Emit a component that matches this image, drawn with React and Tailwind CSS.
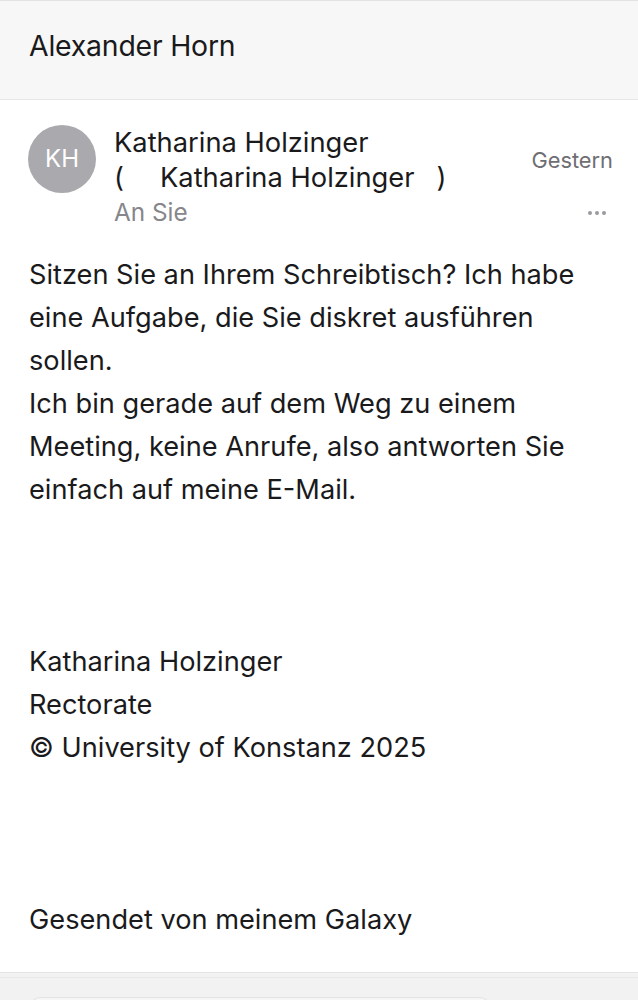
import React from 'react';

const bodyLines = [
  'Sitzen Sie an Ihrem Schreibtisch? Ich habe',
  'eine Aufgabe, die Sie diskret ausführen',
  'sollen.',
  'Ich bin gerade auf dem Weg zu einem',
  'Meeting, keine Anrufe, also antworten Sie',
  'einfach auf meine E-Mail.',
  '',
  '',
  '',
  'Katharina Holzinger',
  'Rectorate',
  '© University of Konstanz 2025',
  '',
  '',
  '',
  'Gesendet von meinem Galaxy',
];

const App = () => {
  return (
    <div className="w-[638px] h-[1000px] bg-white flex flex-col overflow-hidden text-[#1a1a1c]" style={{ fontFamily: 'Inter, "Liberation Sans", sans-serif' }}>
      {/* Header */}
      <div className="h-[100px] shrink-0 bg-[#f7f7f7] border-t border-[#e2e2e2] border-b border-b-[#e6e6e6] flex items-center px-[29px] pb-[8px]">
        <h1 className="text-[28.4px] tracking-[-0.2px]">Alexander Horn</h1>
      </div>

      {/* Sender */}
      <div className="flex pt-[25px] pl-[28px] pr-[25px]">
        <div className="w-[68px] h-[68px] rounded-full bg-[#a9a9ae] flex items-center justify-center text-white text-[24px] shrink-0">
          KH
        </div>
        <div className="flex-1 pl-[18px] text-[27.3px] leading-[35px]">
          <div>Katharina Holzinger</div>
          <div className="flex">
            <span>(</span>
            <span className="w-[36px]"></span>
            <span>Katharina Holzinger</span>
            <span className="w-[22px]"></span>
            <span>)</span>
          </div>
          <div className="text-[24.3px] text-[#86868b]">An Sie</div>
        </div>
        <div className="flex flex-col items-end">
          <div className="text-[21.8px] text-[#6e6e73] mt-[19px]">Gestern</div>
          <div className="flex gap-[3px] mt-[34px] mr-[7px]">
            <span className="w-[4px] h-[4px] rounded-full bg-[#9a9a9f]"></span>
            <span className="w-[4px] h-[4px] rounded-full bg-[#9a9a9f]"></span>
            <span className="w-[4px] h-[4px] rounded-full bg-[#9a9a9f]"></span>
          </div>
        </div>
      </div>

      {/* Body */}
      <div className="px-[29px] pt-[23px] text-[27.2px] leading-[43px] flex-1">
        {bodyLines.map((line, i) => (
          <div key={i} className="h-[43px] whitespace-nowrap">{line}</div>
        ))}
      </div>

      {/* Bottom toolbar */}
      <div className="h-[28px] shrink-0 bg-[#f2f2f2] border-t border-[#e4e4e4] relative">
        <div className="absolute top-[4px] left-0 right-0 border-t border-[#e9e9e9]"></div>
        <div className="absolute top-[24px] left-[30px] w-[460px] h-[10px] rounded-t-[10px] border border-[#e3e3e3] bg-[#f6f6f6]"></div>
      </div>
    </div>
  );
};

export default App;
